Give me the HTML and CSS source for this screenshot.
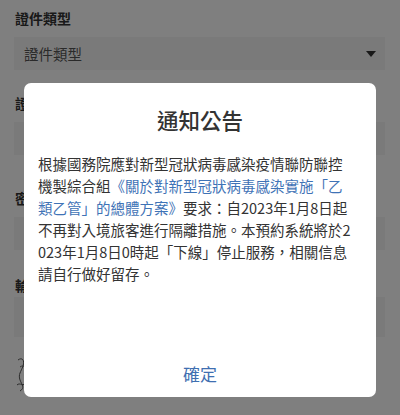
FILE: index.html
```html
<!DOCTYPE html>
<html lang="zh-Hant">
<head>
<meta charset="utf-8">
<title>通知公告</title>
<link rel="stylesheet" href="styles.css">
</head>
<body>
<main class="form">
  <div class="field f1">
    <div class="label">證件類型</div>
    <div class="select">
      <span>證件類型</span>
      <svg class="caret" width="10" height="6" viewBox="0 0 10 6"><path d="M0 0H10L5 6Z" fill="#333"/></svg>
    </div>
  </div>
  <div class="field f2">
    <div class="label">證件號碼</div>
    <div class="input"></div>
  </div>
  <div class="field f3">
    <div class="label">密碼</div>
    <div class="input"></div>
  </div>
  <div class="field f4">
    <div class="label">輸入驗證碼</div>
    <div class="input tall"></div>
  </div>
  <div class="captcha">
    <svg width="90" height="36" viewBox="0 0 90 36">
      <path d="M3 4 C7 1 10 4 8 10 C6 16 3 18 5 24 C7 29 10 32 5 35" fill="none" stroke="#555" stroke-width="1"/>
      <path d="M5 11 C9 8 13 12 10 17 C8 21 12 23 15 19" fill="none" stroke="#666" stroke-width="1"/>
      <path d="M2 29 C5 26 8 31 12 27" fill="none" stroke="#555" stroke-width="1"/>
      <path d="M20 10 C26 6 30 14 34 10 C38 6 42 18 46 14" fill="none" stroke="#777" stroke-width="1"/>
    </svg>
  </div>
</main>

<div class="overlay">
  <section class="dialog">
    <h2 class="title">通知公告</h2>
    <p class="content">根據國務院應對新型冠狀病毒感染疫情聯防聯控<br>機製綜合組<a class="link">《關於對新型冠狀病毒感染實施「乙<br>類乙管」的總體方案》</a>要求：自2023年1月8日起<br>不再對入境旅客進行隔離措施。本預約系統將於2<br>023年1月8日0時起「下線」停止服務，相關信息<br>請自行做好留存。</p>
    <div class="footer">
      <button class="ok">確定</button>
    </div>
  </section>
</div>
</body>
</html>
```

FILE: styles.css
```css
html, body {
  margin: 0;
  padding: 0;
  background: #ffffff;
  font-family: "Noto Sans CJK TC", "Noto Sans", sans-serif;
  color: #333333;
  overflow: hidden;
}

.form {
  padding: 8px 15px 0 14px;
  display: flex;
  flex-direction: column;
}

.field {
  display: flex;
  flex-direction: column;
}

.label {
  font-size: 14px;
  font-weight: 700;
  line-height: 20px;
  color: #333333;
  padding-left: 1px;
}

.select {
  margin-top: 9px;
  height: 33px;
  background: #f5f5f5;
  display: flex;
  align-items: center;
  justify-content: space-between;
  padding: 0 9px 0 10px;
  font-size: 14.5px;
  color: #555555;
}

.caret {
  display: block;
  margin-top: 1px;
}

.input {
  margin-top: 9px;
  height: 33px;
  background: #f5f5f5;
}

.input.tall {
  margin-top: 2px;
  height: 40px;
}

.f2 { margin-top: 23px; }
.f3 { margin-top: 33px; }
.f4 { margin-top: 25px; }

.captcha {
  margin-top: 19px;
  padding-left: 1px;
  height: 36px;
}

.captcha svg { display: block; }

.overlay {
  position: fixed;
  inset: 0;
  background: rgba(0, 0, 0, 0.5);
  display: flex;
  justify-content: center;
  align-items: flex-start;
  padding-top: 83px;
}

.dialog {
  width: 352px;
  height: 314px;
  background: #ffffff;
  border-radius: 7px;
  display: flex;
  flex-direction: column;
  box-sizing: border-box;
  padding: 0 14px;
}

.title {
  margin: 22px 0 0;
  font-size: 21.5px;
  font-weight: 500;
  line-height: 30px;
  text-align: center;
  color: #333333;
}

.content {
  margin: 18px 0 0;
  font-size: 14.5px;
  line-height: 21.9px;
  color: #333333;
  white-space: nowrap;
}

.link {
  color: #3f73b6;
}

.footer {
  margin-top: auto;
  height: 44px;
  display: flex;
  align-items: center;
  justify-content: center;
}

.ok {
  border: 0;
  background: transparent;
  font-family: inherit;
  font-size: 17px;
  color: #3f6fb1;
  padding: 0;
  line-height: 24px;
  margin-bottom: 2px;
}
```
